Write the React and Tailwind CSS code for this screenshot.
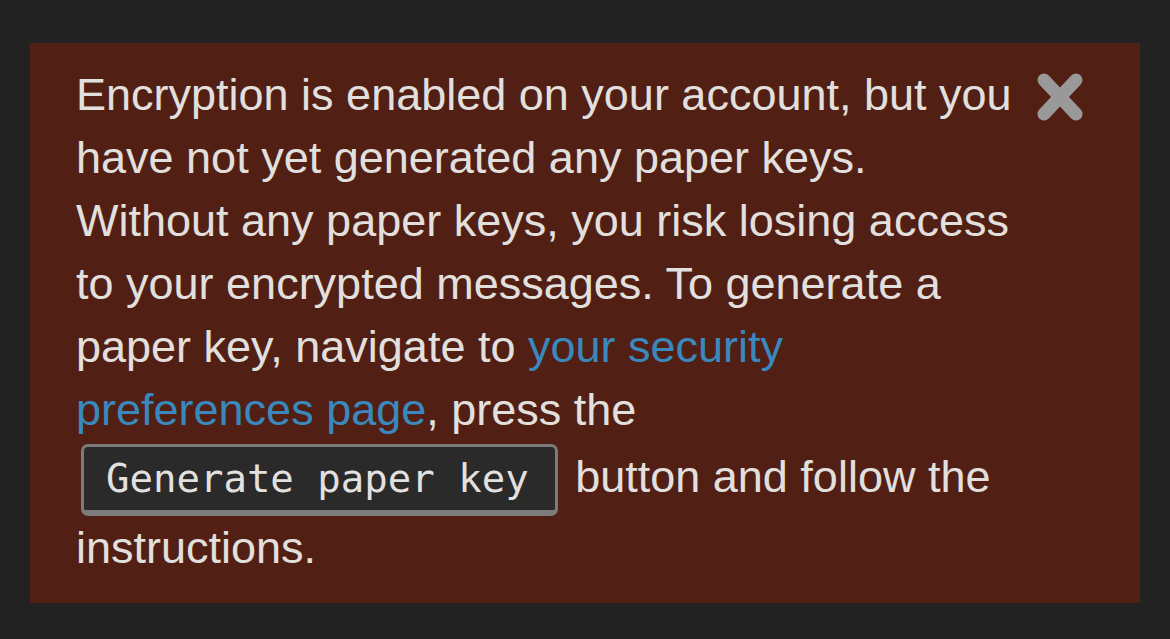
import React from "react";

export default function App() {
  return (
    <div className="min-h-[639px] w-full bg-[#222222] pt-[43px] pb-[36px] px-[30px]" style={{ fontFamily: '"Liberation Sans", Arial, sans-serif' }}>
      <div className="flex items-start bg-[#521f15] pt-[20px] pb-[24px] pl-[46px] pr-[57px]">
        <div className="flex-1 min-w-0 text-[45px] leading-[63px] text-[#e2e0df]">
          Encryption is enabled on your account, but you have not yet generated any paper keys. Without any paper keys, you risk losing access to your encrypted messages. To generate a paper key, navigate to{" "}
          <a href="#" className="text-[#3a89be]">your security preferences page</a>, press the{" "}
          <kbd
            className="inline-block mt-[3px] ml-[5px] mr-[5px] rounded-[7px] border-[3px] border-b-[6px] border-[#7b7b7b] bg-[#2a2a2a] pl-[22px] pr-[26px] pt-[12px] pb-[12px] text-[39px] leading-[39px] text-[#e3e1e0]"
            style={{ fontFamily: '"DejaVu Sans Mono", "Liberation Mono", monospace' }}
          >
            Generate paper key
          </kbd>{" "}
          button and follow the instructions.
        </div>
        <button className="ml-[17px] mt-[10px] w-[46px] h-[48px] shrink-0" aria-label="Close">
          <svg viewBox="0 0 46 48" width="46" height="48">
            <g stroke="#999999" strokeWidth="13" strokeLinecap="round">
              <line x1="7" y1="7" x2="39" y2="41" />
              <line x1="39" y1="7" x2="7" y2="41" />
            </g>
          </svg>
        </button>
      </div>
    </div>
  );
}
